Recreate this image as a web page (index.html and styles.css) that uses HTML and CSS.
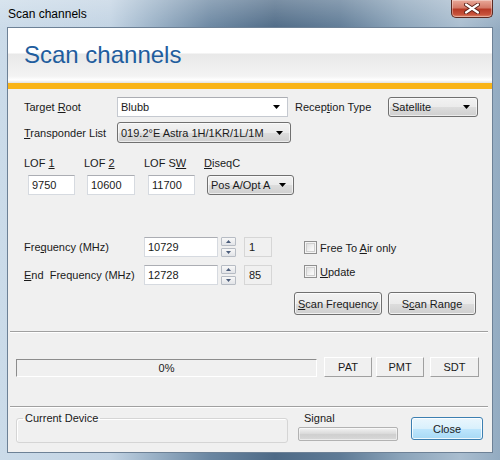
FILE: index.html
```html
<!DOCTYPE html>
<html>
<head>
<meta charset="utf-8">
<link rel="stylesheet" href="styles.css">
</head>
<body>
<div class="win">
  <div class="titlebar">
    <span class="title">Scan channels</span>
    <div class="close-x">
      <svg width="16" height="11" viewBox="0 0 16 11"><path d="M2 1.5 L14 9.5 M14 1.5 L2 9.5" stroke="#5a2018" stroke-width="4" stroke-linecap="round"/><path d="M2 1.5 L14 9.5 M14 1.5 L2 9.5" stroke="#fff" stroke-width="2.2" stroke-linecap="round"/></svg>
    </div>
  </div>
  <div class="client">
    <div class="header"><h1 class="heading">Scan channels</h1></div>
    <div class="orange"></div>
    <div class="body">
      <div class="section">
        <div class="row r1">
          <span class="lbl w93">Target <u>R</u>oot</span>
          <div class="combo edit w171"><span>Blubb</span><svg class="arr" width="7" height="4" viewBox="0 0 7 4"><path d="M0 0h7l-3.5 4z"/></svg></div>
          <span class="lbl w93 ml7">Recep<u>t</u>ion Type</span>
          <div class="combo list w90"><span>Satellite</span><svg class="arr" width="7" height="4" viewBox="0 0 7 4"><path d="M0 0h7l-3.5 4z"/></svg></div>
        </div>
        <div class="row r2">
          <span class="lbl w93"><u>T</u>ransponder List</span>
          <div class="combo list w174"><span>019.2°E Astra 1H/1KR/1L/1M</span><svg class="arr" width="7" height="4" viewBox="0 0 7 4"><path d="M0 0h7l-3.5 4z"/></svg></div>
        </div>
        <div class="lofs">
          <div class="lof">
            <span class="lbl">LOF <u>1</u></span>
            <div class="tb lofin m4 w47">9750</div>
          </div>
          <div class="lof">
            <span class="lbl">LOF <u>2</u></span>
            <div class="tb lofin m3 w48">10600</div>
          </div>
          <div class="lof">
            <span class="lbl">LOF S<u>W</u></span>
            <div class="tb lofin m4 w47">11700</div>
          </div>
          <div class="lof">
            <span class="lbl"><u>D</u>iseqC</span>
            <div class="combo list lofin m3 w87"><span>Pos A/Opt A</span><svg class="arr" width="7" height="4" viewBox="0 0 7 4"><path d="M0 0h7l-3.5 4z"/></svg></div>
          </div>
        </div>
        <div class="freq-area">
          <div class="freq-left">
            <div class="frow">
              <span class="lbl w120">Fre<u>q</u>uency (MHz)</span>
              <div class="tb w74">10729</div>
              <div class="spin"><div class="sb"><svg width="5" height="3" viewBox="0 0 5 3"><path d="M0 3h5l-2.5-3z"/></svg></div><div class="sb"><svg width="5" height="3" viewBox="0 0 5 3"><path d="M0 0h5l-2.5 3z"/></svg></div></div>
              <div class="tb ro w28">1</div>
            </div>
            <div class="frow f2">
              <span class="lbl w120"><u>E</u>nd&nbsp; Frequency (MHz)</span>
              <div class="tb w74">12728</div>
              <div class="spin"><div class="sb"><svg width="5" height="3" viewBox="0 0 5 3"><path d="M0 3h5l-2.5-3z"/></svg></div><div class="sb"><svg width="5" height="3" viewBox="0 0 5 3"><path d="M0 0h5l-2.5 3z"/></svg></div></div>
              <div class="tb ro w28">85</div>
            </div>
          </div>
          <div class="freq-right">
            <div class="chk"><span class="box"></span><span>Free To <u>A</u>ir only</span></div>
            <div class="chk c2"><span class="box"></span><span><u>U</u>pdate</span></div>
            <div class="btns">
              <div class="btn w88"><span><u>S</u>can Frequency</span></div>
              <div class="btn w88"><span>S<u>c</u>an Range</span></div>
            </div>
          </div>
        </div>
      </div>
      <div class="sep s1"></div>
      <div class="prow">
        <div class="progress">0%</div>
        <div class="fbtn w48 ml7">PAT</div>
        <div class="fbtn w48 ml4">PMT</div>
        <div class="fbtn w49 ml6">SDT</div>
      </div>
      <div class="sep s2"></div>
      <div class="brow">
        <fieldset class="group"><legend>Current Device</legend></fieldset>
        <div class="signal">
          <span class="lbl sig-lbl">Signal</span>
          <div class="sigbar"></div>
        </div>
        <div class="btn default w72"><span>Close</span></div>
      </div>
    </div>
  </div>
</div>
</body>
</html>
```
FILE: styles.css
```css
* { box-sizing: border-box; }
body { margin: 0; font-family: "Liberation Sans", Arial, sans-serif; font-size: 11px; color: #1a1a1a; }
u { text-decoration: underline; text-underline-offset: 1px; }

.win {
  width: 500px; height: 460px;
  display: flex; flex-direction: column;
  padding: 0 7px 7px 7px;
  background:
    linear-gradient(180deg, rgba(255,255,255,0.25) 0, rgba(255,255,255,0) 30px),
    linear-gradient(90deg, #cbdbe9 0%, #c2d3e3 22%, #9db4c9 30%, #6a86a1 42%, #4e6a86 55%, #5f7b96 68%, #8aa3b9 80%, #a9bdcf 92%, #93abc1 100%);
}
.titlebar { height: 27px; display: flex; justify-content: space-between; align-items: flex-start; }
.title { margin: 6px 0 0 1px; font-size: 12px; line-height: 16px; color: #000; }
.close-x {
  width: 42px; height: 18px;
  border: 1px solid #5b2a22; border-top: none;
  border-radius: 0 0 5px 5px;
  background: linear-gradient(180deg, #e9a99a 0%, #d47a68 45%, #b73a26 55%, #c7523b 85%, #e08a6e 100%);
  display: flex; align-items: center; justify-content: center;
  box-shadow: inset 0 0 0 1px rgba(255,255,255,0.35);
}

.client { flex: 1; border: 1px solid #6d8196; background: #f0f0f0; display: flex; flex-direction: column; }
.header {
  height: 55px;
  padding: 13px 0 0 16px;
  background: linear-gradient(180deg, #ffffff 0, #ffffff 25px, #e8e8e8 26px, #f3f3f3 48px, #ffffff 52px, #e2e2e2 55px);
}
.heading { margin: 0; font-family: "Liberation Sans", Arial, sans-serif; font-weight: normal; font-size: 24px; line-height: 28px; color: #1f5d9e; }
.orange { height: 6px; background: #f9b417; }

.body { flex: 1; padding-top: 8px; }
.section { padding: 0 0 0 16px; }
.row { display: flex; align-items: center; }
.r2 { margin-top: 5px; }
.lbl { line-height: 14px; white-space: nowrap; }
.w93 { width: 93px; flex: none; }
.w120 { width: 120px; flex: none; }
.ml7 { margin-left: 7px; }
.ml4 { margin-left: 4px; }
.ml6 { margin-left: 6px; }
.w171 { width: 171px; } .w90 { width: 90px; } .w174 { width: 174px; }
.w47 { width: 47px; } .w48 { width: 48px; } .w49 { width: 49px; } .w87 { width: 87px; }
.w74 { width: 74px; } .w28 { width: 28px; } .w88 { width: 88px; } .w72 { width: 72px; }

.combo {
  height: 20px; display: flex; align-items: center; justify-content: space-between;
  padding: 0 7px 0 3px; white-space: nowrap; flex: none;
}
.r2 .combo { height: 21px; }
.combo .arr { flex: none; fill: #000; }
.combo.edit { background: #fff; border: 1px solid #c5c9d0; border-top-color: #abadb3; }
.combo.list {
  border: 1px solid #707070; border-radius: 3px;
  background: linear-gradient(180deg, #f2f2f2 0%, #ebebeb 50%, #dddddd 51%, #cfcfcf 100%);
  box-shadow: inset 0 0 0 1px rgba(255,255,255,0.6);
}

.lofs { display: flex; margin-top: 13px; }
.lof { width: 60px; display: flex; flex-direction: column; }
.lofin { margin-top: 5px; }
.m4 { margin-left: 4px; } .m3 { margin-left: 3px; }

.tb {
  height: 20px; flex: none; background: #fff;
  border: 1px solid #d6dae0; border-top-color: #abadb3;
  padding: 0 3px; line-height: 18px;
}
.tb.ro { background: #f0f0f0; border-color: #d6d6d6; margin-left: 8px; padding-left: 4px; }

.freq-area { display: flex; margin-top: 42px; }
.freq-left { width: 248px; flex: none; }
.frow { display: flex; align-items: center; height: 20px; }
.f2 { margin-top: 8px; }
.spin { margin-left: 3px; width: 15px; height: 20px; display: flex; flex-direction: column; justify-content: space-between; flex: none; }
.sb {
  height: 9px; border: 1px solid #b7bcc4; border-radius: 1px;
  background: linear-gradient(180deg, #f8f8f8, #e2e4e8);
  display: flex; align-items: center; justify-content: center;
}
.sb svg { fill: #4a5c7a; }

.freq-right { margin-left: 22px; padding-top: 4px; }
.chk { display: flex; align-items: center; height: 13px; margin-left: 10px; }
.c2 { margin-top: 11px; }
.chk .box {
  width: 13px; height: 13px; margin-right: 3px; flex: none;
  border: 1px solid #8f8f8f;
  background: linear-gradient(135deg, #d6d6d6 0%, #f4f4f4 60%, #ffffff 100%);
  box-shadow: inset 0 0 0 1px #f4f4f4, inset 0 0 0 2px #cfcfcf;
}
.btns { display: flex; margin-top: 14px; gap: 6px; }
.btn {
  height: 23px; flex: none;
  border: 1px solid #707070; border-radius: 3px;
  background: linear-gradient(180deg, #f2f2f2 0%, #ebebeb 50%, #dddddd 51%, #cfcfcf 100%);
  box-shadow: inset 0 0 0 1px rgba(255,255,255,0.7);
  display: flex; align-items: center; justify-content: center; line-height: 14px;
}
.btn.default {
  border-color: #3c7fb1;
  background: linear-gradient(180deg, #eaf6fd 0%, #d9f0fc 50%, #bee6fd 51%, #a7d9f5 100%);
  box-shadow: inset 0 0 0 1px rgba(255,255,255,0.8);
  margin-left: 13px; margin-top: 6px;
}

.sep { height: 2px; border-top: 1px solid #a0a0a0; border-bottom: 1px solid #ffffff; margin: 0 4px 0 2px; }
.s1 { margin-top: 16px; }
.s2 { margin-top: 29px; }

.prow { display: flex; align-items: flex-end; margin-top: 24px; padding-left: 8px; height: 20px; }
.progress {
  width: 301px; height: 18px; flex: none;
  border: 1px solid; border-color: #8c8c8c #ffffff #ffffff #8c8c8c;
  background: #f0f0f0; text-align: center; line-height: 16px;
}
.fbtn {
  height: 20px; flex: none; align-self: flex-start;
  border: 1px solid; border-color: #ffffff #a0a0a0 #a0a0a0 #ffffff;
  background: #f0f0f0; text-align: center; line-height: 18px;
}

.brow { display: flex; align-items: flex-start; margin-top: 3px; padding-left: 8px; }
.group {
  width: 272px; height: 32px; margin: 0; padding: 0 6px; flex: none;
  border: 1px solid #d5d5d5; border-radius: 3px;
  box-shadow: inset 1px 1px 0 #fff;
}
.group legend { padding: 0 2px; line-height: 14px; }
.signal { margin-left: 8px; width: 102px; display: flex; flex-direction: column; }
.sig-lbl { padding-left: 8px; }
.sigbar {
  margin: 2px 0 0 2px; width: 100px; height: 14px;
  border: 1px solid #b2b2b2; border-radius: 2px;
  background: linear-gradient(180deg, #f3f3f3 0%, #dcdcdc 45%, #cfcfcf 55%, #d9d9d9 100%);
  box-shadow: inset 0 0 0 1px rgba(255,255,255,0.5);
}
```
